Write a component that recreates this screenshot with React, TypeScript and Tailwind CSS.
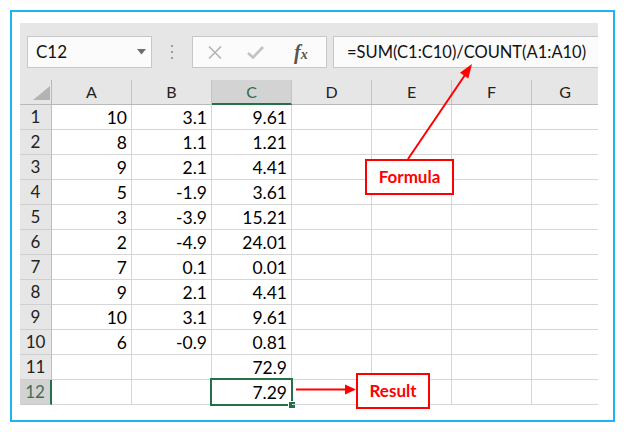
import React from 'react'

const COLS = ['A', 'B', 'C', 'D', 'E', 'F', 'G']

// rows 1..12, values for A, B, C
const ROWS: [string, string, string][] = [
  ['10', '3.1', '9.61'],
  ['8', '1.1', '1.21'],
  ['9', '2.1', '4.41'],
  ['5', '-1.9', '3.61'],
  ['3', '-3.9', '15.21'],
  ['2', '-4.9', '24.01'],
  ['7', '0.1', '0.01'],
  ['9', '2.1', '4.41'],
  ['10', '3.1', '9.61'],
  ['6', '-0.9', '0.81'],
  ['', '', '72.9'],
  ['', '', '7.29'],
]

function Toolbar() {
  return (
    <div className="h-[57px] bg-[#e6e6e6] flex items-start pt-[13px] pl-[7px]">
      {/* Name box */}
      <div className="relative w-[125px] h-[32px] bg-[#fbfbfb] border border-[#c8c8c8] flex items-center pl-[8px] text-[17px] text-[#111]">
        C12
        <svg className="absolute left-[109px] top-[12px]" width="9" height="6" viewBox="0 0 9 6">
          <path d="M0 0 L9 0 L4.5 5.5 Z" fill="#6e6e6e" />
        </svg>
      </div>

      {/* separator dots */}
      <div className="w-[40px] h-[32px] flex flex-col items-center justify-center gap-[4px]">
        <span className="w-[2px] h-[2px] bg-[#9c9c9c]" />
        <span className="w-[2px] h-[2px] bg-[#9c9c9c]" />
        <span className="w-[2px] h-[2px] bg-[#9c9c9c]" />
      </div>

      {/* cancel / enter / fx */}
      <div className="w-[135px] h-[32px] bg-[#fbfbfb] border border-[#c8c8c8] flex items-center">
        <svg className="ml-[15px]" width="14" height="13" viewBox="0 0 14 13">
          <path d="M1 0.5 L13 12.5 M13 0.5 L1 12.5" stroke="#b4b4b4" strokeWidth="1.6" />
        </svg>
        <svg className="ml-[25px]" width="17" height="13" viewBox="0 0 17 13">
          <path d="M1 7 L6 11.5 L16 1" stroke="#c2c2c2" strokeWidth="2.6" fill="none" />
        </svg>
        <span className="ml-[30px] font-['Liberation_Serif',serif] italic font-bold text-[20px] text-[#555] leading-none">
          f<span className="text-[14px]">x</span>
        </span>
      </div>

      {/* formula input */}
      <div className="ml-[6px] flex-1 h-[32px] bg-[#fbfbfb] border border-r-0 border-[#c8c8c8] flex items-center pl-[13px] text-[16.5px] text-[#111] whitespace-nowrap">
        =SUM(C1:C10)/COUNT(A1:A10)
      </div>
    </div>
  )
}

function Grid() {
  return (
    <div className="grid grid-cols-[32px_80px_80px_80px_80px_80px_80px_66px] bg-white">
      {/* corner */}
      <div className="relative h-[25px] bg-[#e6e6e6] border-r border-b border-[#b9b9b9]">
        <svg className="absolute left-[13px] top-[6px]" width="18" height="15" viewBox="0 0 18 15">
          <path d="M17 0 L17 14 L0 14 Z" fill="#b3b3b3" />
        </svg>
      </div>
      {COLS.map(c => {
        const sel = c === 'C'
        return (
          <div
            key={c}
            className={
              sel
                ? 'h-[25px] bg-[#d3d3d3] border-r border-[#c4c4c4] border-b-2 border-b-[#217346] flex items-center justify-center text-[16px] text-[#2d6b4c]'
                : c === 'G'
                  ? 'h-[25px] bg-[#e6e6e6] border-b border-[#b9b9b9] flex items-center justify-center text-[16px] text-[#222]'
                  : 'h-[25px] bg-[#e6e6e6] border-r border-b border-r-[#c4c4c4] border-b-[#b9b9b9] flex items-center justify-center text-[16px] text-[#222]'
            }
          >
            {c}
          </div>
        )
      })}

      {ROWS.map((r, i) => {
        const n = i + 1
        const selRow = n === 12
        return (
          <React.Fragment key={n}>
            <div
              className={
                selRow
                  ? 'h-[25px] bg-[#d3d3d3] border-r-2 border-r-[#217346] border-b border-b-[#c9c9c9] flex items-center justify-center text-[17px] text-[#3c6e56]'
                  : 'h-[25px] bg-[#e6e6e6] border-r border-b border-r-[#bdbdbd] border-b-[#cfcfcf] flex items-center justify-center text-[17px] text-[#222]'
              }
            >
              {n}
            </div>
            {COLS.map((c, j) => {
              const v = j < 3 ? r[j] : ''
              const active = selRow && c === 'C'
              return (
                <div
                  key={c}
                  className={
                    c === 'G'
                      ? 'h-[25px] border-b border-[#d6d6d6]'
                      : 'relative h-[25px] border-r border-b border-[#d6d6d6] flex items-center justify-end pr-[4px] pt-[2px] text-[17.5px] text-black'
                  }
                >
                  {v}
                  {active && (
                    <>
                      <div className="absolute -left-[2px] -top-[2px] w-[83px] h-[28px] border-2 border-[#217346]" />
                      <div className="absolute left-[76px] top-[21px] w-[8px] h-[8px] bg-[#217346] border border-white" />
                    </>
                  )}
                </div>
              )
            })}
          </React.Fragment>
        )
      })}
    </div>
  )
}

export default function App() {
  return (
    <div className="relative w-[625px] h-[432px] bg-white pt-[10px] pl-[10px] font-['Lato',sans-serif]">
      <div className="w-[605px] h-[412px] border-2 border-[#1db4ef] pl-[8px] pt-[11px]">
        <div className="w-[578px]">
          <Toolbar />
          <Grid />
        </div>
      </div>

      {/* annotation: Formula */}
      <div className="absolute left-[365px] top-[159px] w-[89px] h-[36px] border-2 border-[#ff0000] bg-white flex items-center justify-center text-[17px] font-bold text-[#ff0000]">
        Formula
      </div>

      {/* annotation: Result */}
      <div className="absolute left-[356px] top-[373px] w-[74px] h-[36px] border-2 border-[#ff0000] bg-white flex items-center justify-center text-[17px] font-bold text-[#ff0000]">
        Result
      </div>

      {/* arrows */}
      <svg className="absolute left-0 top-0 pointer-events-none" width="625" height="432" viewBox="0 0 625 432">
        <line x1="408" y1="159" x2="465" y2="75" stroke="#ff0000" strokeWidth="2" />
        <path d="M472 64 L468.3 78.4 L460 72.8 Z" fill="#ff0000" />
        <line x1="296" y1="389.5" x2="346" y2="389.5" stroke="#ff0000" strokeWidth="2" />
        <path d="M356 389.5 L345 384.5 L345 394.5 Z" fill="#ff0000" />
      </svg>
    </div>
  )
}
